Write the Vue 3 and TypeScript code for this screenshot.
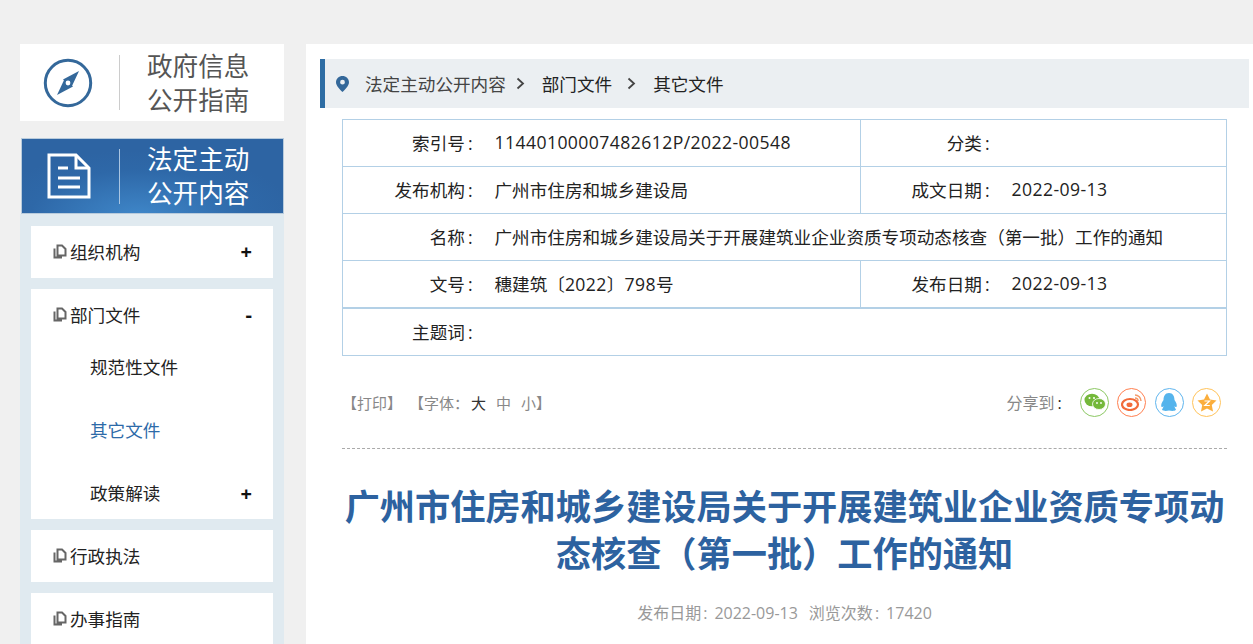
<script setup lang="ts">
interface Cell { label: string; value: string; span?: boolean }
const rows: Cell[][] = [
  [{ label: '索引号', value: '11440100007482612P/2022-00548' }, { label: '分类', value: '' }],
  [{ label: '发布机构', value: '广州市住房和城乡建设局' }, { label: '成文日期', value: '2022-09-13' }],
  [{ label: '名称', value: '广州市住房和城乡建设局关于开展建筑业企业资质专项动态核查\uFF08第一批\uFF09工作的通知', span: true }],
  [{ label: '文号', value: '穗建筑〔2022〕798号' }, { label: '发布日期', value: '2022-09-13' }],
  [{ label: '主题词', value: '', span: true }]
]
const subs = [
  { name: '规范性文件', active: false, plus: false },
  { name: '其它文件', active: true, plus: false },
  { name: '政策解读', active: false, plus: true }
]
const title = '广州市住房和城乡建设局关于开展建筑业企业资质专项动态核查\uFF08第一批\uFF09工作的通知'
const fontLabel = '【字体\uFF1A'
const parts = (v: string): string[] => v.split(/([\x00-\x7f]+)/).filter(Boolean)
const isLatin = (v: string): boolean => /^[\x00-\x7f]+$/.test(v)
</script>

<template>
  <div class="page">
    <aside class="side">
      <div class="brand">
        <div class="brand-icon">
          <svg width="50" height="50" viewBox="0 0 50 50">
            <circle cx="25" cy="25" r="22.700" fill="none" stroke="#34689a" stroke-width="3" />
            <path d="M36 13 L28.500 29 L20 21.500 Z" fill="#34689a" />
            <path d="M14 37 L21.500 21 L30 28.500 Z" fill="#34689a" />
            <circle cx="25" cy="25" r="2.400" fill="#fff" />
          </svg>
        </div>
        <div class="brand-text">政府信息<br />公开指南</div>
      </div>
      <div class="banner">
        <div class="brand-icon">
          <svg width="44" height="46" viewBox="0 0 44 46" fill="none" stroke="#fff" stroke-width="3">
            <path d="M2 2 H29 L42 15 V44 H2 Z" />
            <path d="M29 2 V15 H42" />
            <path d="M11 15 H21 M11 25 H33 M11 34 H33" />
          </svg>
        </div>
        <div class="brand-text">法定主动<br />公开内容</div>
      </div>
      <nav class="nav">
        <div class="nav-item">
          <div class="nav-head"><svg class="copy" width="14" height="15" viewBox="0 0 14 15"><path d="M4.500 1.500 H9 L12.500 5 V11.500 H4.500 Z M1.500 4.500 V13.500 H9" fill="none" stroke="#666" stroke-width="2" /></svg><span>组织机构</span><b>+</b></div>
        </div>
        <div class="nav-item open">
          <div class="nav-head"><svg class="copy" width="14" height="15" viewBox="0 0 14 15"><path d="M4.500 1.500 H9 L12.500 5 V11.500 H4.500 Z M1.500 4.500 V13.500 H9" fill="none" stroke="#666" stroke-width="2" /></svg><span>部门文件</span><b>-</b></div>
          <ul class="subs">
            <li v-for="s in subs" :key="s.name" :class="{ active: s.active }"><span>{{ s.name }}</span><b v-if="s.plus">+</b></li>
          </ul>
        </div>
        <div class="nav-item">
          <div class="nav-head"><svg class="copy" width="14" height="15" viewBox="0 0 14 15"><path d="M4.500 1.500 H9 L12.500 5 V11.500 H4.500 Z M1.500 4.500 V13.500 H9" fill="none" stroke="#666" stroke-width="2" /></svg><span>行政执法</span></div>
        </div>
        <div class="nav-item">
          <div class="nav-head"><svg class="copy" width="14" height="15" viewBox="0 0 14 15"><path d="M4.500 1.500 H9 L12.500 5 V11.500 H4.500 Z M1.500 4.500 V13.500 H9" fill="none" stroke="#666" stroke-width="2" /></svg><span>办事指南</span></div>
        </div>
      </nav>
    </aside>

    <main class="main">
      <div class="crumb">
        <svg class="pin" width="13" height="16" viewBox="0 0 13 16"><path fill-rule="evenodd" d="M6.500 0 C10 0 13 2.700 13 6.200 C13 10 8.500 14 6.500 16 C4.500 14 0 10 0 6.200 C0 2.700 3 0 6.500 0 Z M6.500 3.800 A2.400 2.400 0 1 0 6.500 8.600 A2.400 2.400 0 1 0 6.500 3.800 Z" fill="#34689a" /></svg>
        <span class="c1">法定主动公开内容</span>
        <svg class="chev" width="9" height="13" viewBox="0 0 9 13"><path d="M1.500 1.500 L7 6.500 L1.500 11.500" fill="none" stroke="#444" stroke-width="1.800" /></svg>
        <span class="c2">部门文件</span>
        <svg class="chev c3" width="9" height="13" viewBox="0 0 9 13"><path d="M1.500 1.500 L7 6.500 L1.500 11.500" fill="none" stroke="#444" stroke-width="1.800" /></svg>
        <span class="c2">其它文件</span>
      </div>

      <table class="info">
        <colgroup>
          <col style="width: 131px" />
          <col style="width: 387px" />
          <col style="width: 130px" />
          <col style="width: 236px" />
        </colgroup>
        <tbody>
          <tr v-for="(r, i) in rows" :key="i">
            <template v-for="(c, j) in r" :key="j">
              <td class="lab">{{ c.label }}<i class="colon">:</i></td>
              <td class="val" :colspan="c.span ? 3 : 1"><span v-for="(p, k) in parts(c.value)" :key="k" :class="{ num: isLatin(p) }">{{ p }}</span></td>
            </template>
          </tr>
        </tbody>
      </table>

      <div class="tools">
        <div class="tl"><span>【打印】</span><span class="font">{{ fontLabel }}<i class="big">大</i><i>中</i><i>小</i>】</span></div>
        <div class="share">
          <span class="share-label">分享到<i>:</i></span>
          <span class="sh" style="border-color:#8cc863">
            <svg width="22" height="18" viewBox="0 0 22 18"><ellipse cx="8" cy="7" rx="7.500" ry="6.300" fill="#74b83a" /><ellipse cx="15" cy="11" rx="6.500" ry="5.500" fill="#74b83a" stroke="#fff" stroke-width=".8" /><circle cx="5.500" cy="5" r="1" fill="#fff" /><circle cx="10" cy="5" r="1" fill="#fff" /><circle cx="13" cy="10" r=".9" fill="#fff" /><circle cx="17" cy="10" r=".9" fill="#fff" /></svg>
          </span>
          <span class="sh" style="border-color:#ff7f50">
            <svg width="22" height="18" viewBox="0 0 22 18"><ellipse cx="9" cy="11.500" rx="8" ry="5.500" fill="none" stroke="#f26b3a" stroke-width="2.200" /><ellipse cx="8.500" cy="11.800" rx="3" ry="2.300" fill="#f26b3a" /><path d="M14 2 A6 6 0 0 1 20 8 M14 5 A3 3 0 0 1 17 8" fill="none" stroke="#f59a6a" stroke-width="1.500" /></svg>
          </span>
          <span class="sh" style="border-color:#5fb5ee">
            <svg width="18" height="20" viewBox="0 0 18 20"><path d="M9 1 C13 1 14.500 4.500 14.500 8 C16 10 17.500 13 16.500 15 C15.500 15.500 14.500 14 14.500 14 C14.500 15.500 15.500 16.500 16 17.500 C15 19.500 11 19 9 18.500 C7 19 3 19.500 2 17.500 C2.500 16.500 3.500 15.500 3.500 14 C3.500 14 2.500 15.500 1.500 15 C.5 13 2 10 3.500 8 C3.500 4.500 5 1 9 1 Z" fill="#55b4ec" /></svg>
          </span>
          <span class="sh" style="border-color:#ffc35a">
            <svg width="20" height="19" viewBox="0 0 20 19"><path d="M10 0.500 L13 6.500 L19.500 7.400 L14.800 12 L16 18.500 L10 15.400 L4 18.500 L5.200 12 L0.500 7.400 L7 6.500 Z" fill="#fbae3c" /><path d="M7.500 8 H12.500 L7.800 12.500 H12.800" fill="none" stroke="#fff" stroke-width="1.200" /></svg>
          </span>
        </div>
      </div>

      <h1 class="title">{{ title }}</h1>
      <p class="meta"><span>发布日期</span><i>:</i>2022-09-13<span class="gap">浏览次数</span><i>:</i>17420</p>
    </main>
  </div>
</template>

<style>
html, body { margin: 0; padding: 0; background: #f0f0f0; overflow: hidden; }
</style>

<style scoped>
.page {
  display: flex;
  align-items: flex-start;
  gap: 22px;
  height: 600px;
  padding: 44px 0 0 20px;
  overflow: hidden;
  font-family: "Open Sans", "Noto Sans CJK SC", sans-serif;
  text-spacing-trim: space-all;
  color: #222;
}
.side { width: 264px; flex: none; }
.brand {
  display: flex;
  align-items: center;
  height: 77px;
  background: #fff;
  color: #555;
}
.brand-icon {
  width: 100px;
  height: 55px;
  flex: none;
  display: flex;
  align-items: center;
  justify-content: center;
  box-sizing: border-box;
  padding-right: 3px;
  border-right: 1px solid #ccc;
}
.brand-text {
  padding: 2px 0 0 27px;
  font-size: 25.6px;
  line-height: 34px;
  white-space: nowrap;
}
.banner {
  display: flex;
  align-items: center;
  box-sizing: border-box;
  height: 76px;
  margin: 17px 0 0 1px;
  color: #fff;
  border: 1px solid #b8cbdc;
  background: radial-gradient(ellipse 60% 90% at 45% 105%, #3f87c9 0%, #2e68a8 70%, #2d64a3 100%);
}
.banner .brand-icon { width: 98px; border-right-color: #a9c5e2; }
.nav {
  background: #e0eaf0;
  padding: 12px 11px 11px;
  display: flex;
  flex-direction: column;
  gap: 11px;
}
.nav-item { background: #fff; padding-bottom: 5px; }
.nav-item.open { padding-bottom: 0; }
.nav-head {
  display: flex;
  align-items: center;
  height: 44px;
  padding: 3px 21px 0 22px;
  font-size: 17.6px;
}
.copy { margin-right: 3px; flex: none; }
.nav-head span { flex: 1; }
.nav-head b, .subs b { font-size: 20px; font-weight: 700; color: #111; }
.subs { list-style: none; margin: 0; padding: 0; font-size: 17.6px; }
.subs li {
  display: flex;
  justify-content: space-between;
  height: 63px;
  line-height: 63px;
  padding: 0 21px 0 59px;
}
.subs li:last-child { height: 57px; }
.subs li.active { color: #2d6aa8; }
.main {
  flex: 1;
  background: #fff;
  height: 600px;
  padding: 15px 4px 0 14px;
  min-width: 0;
}
.crumb {
  display: flex;
  align-items: center;
  height: 49px;
  background: #ebeff2;
  border-left: 5px solid #2e6da4;
  font-size: 17.6px;
}
.pin { margin-left: 11px; margin-right: 16px; }
.c1 { color: #444; }
.chev { margin: 0 17px 0 10px; }
.chev.c3 { margin: 0 17px 0 15px; }
.c2 { color: #222; }
.info {
  width: 884px;
  margin: 11px 0 0 22px;
  border-collapse: collapse;
  table-layout: fixed;
  font-size: 17.6px;
}
.info td { border: 1px solid #b3d0e6; height: 44px; padding: 0 0 2px; }
.info tr:last-child td { border-top-width: 2px; }
.lab { text-align: right; border-right: 0 !important; white-space: nowrap; padding-right: 1px !important; }
.colon { font-style: normal; margin-left: 3px; }
.val { padding-left: 21px !important; border-left: 0 !important; white-space: nowrap; }
.num { letter-spacing: .42px; }
.tools {
  display: flex;
  justify-content: space-between;
  align-items: center;
  width: 885px;
  height: 93px;
  margin-left: 22px;
  border-bottom: 1px dashed #aaa;
  box-sizing: border-box;
  font-size: 15px;
  color: #888;
}
.font { margin-left: 7px; }
.font i { font-style: normal; margin-right: 10px; }
.font i:first-of-type { margin-left: 2px; }
.font i:last-child { margin-right: 0; }
.big { color: #333; }
.share { display: flex; align-items: center; gap: 8.300px; padding-right: 6px; }
.share-label { font-size: 16px; margin-right: 10px; }
.share-label i { font-style: normal; color: #222; margin-left: 3px; }
.sh {
  width: 27px;
  height: 27px;
  border: 1px solid;
  border-radius: 50%;
  display: flex;
  align-items: center;
  justify-content: center;
}
.title {
  width: 885px;
  margin: 34px 0 0 22px;
  font-size: 35.2px;
  line-height: 47px;
  font-weight: 700;
  color: #2d62a0;
  text-align: center;
}
.meta {
  width: 885px;
  margin: 23px 0 0 22px;
  font-size: 16px;
  color: #999;
  text-align: center;
}
.meta i { font-style: normal; margin: 0 7px 0 2px; }
.gap { margin-left: 11px; }
</style>
